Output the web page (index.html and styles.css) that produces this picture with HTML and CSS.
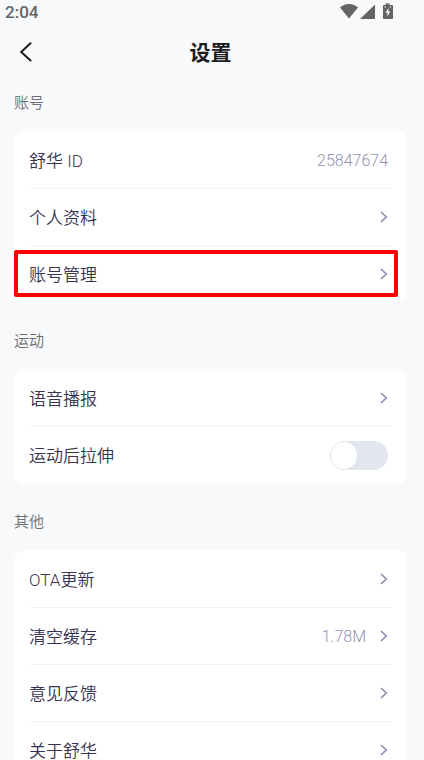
FILE: index.html
```
<!DOCTYPE html>
<html lang="zh-CN">
<head>
<meta charset="utf-8">
<meta name="viewport" content="width=device-width, initial-scale=1">
<title>设置</title>
<link rel="stylesheet" href="styles.css">
</head>
<body>
<svg class="defs" aria-hidden="true">
  <symbol id="chevron" viewBox="0 0 8 12"><path d="M1 1L6.300 6L1 11"/></symbol>
</svg>
<div class="app">
  <div class="status">
    <span class="time">2:04</span>
    <svg class="status-icons" viewBox="0 0 54 18" aria-hidden="true">
      <path d="M0 7C2.500 4.800 5.500 3.500 9 3.500s6.500 1.300 9 3.500L9 18Z"/>
      <path d="M35 4V18.500H20Z"/>
      <path d="M45.500 3h4v1.400h2.500c.6 0 1 .4 1 1v12c0 .6-.4 1-1 1h-8c-.6 0-1-.4-1-1v-12c0-.6.400-1 1-1h1.500Z"/>
      <path class="bolt" d="M48.400 7.500L45.400 12.200h2V16L50.300 10.900H48.400Z"/>
      <path class="bolt" d="M44.400 6h1.500v.9h-1.500ZM49.600 6h1.500v.9h-1.500Z"/>
    </svg>
  </div>
  <header class="topbar">
    <button class="back" type="button" aria-label="返回">
      <svg viewBox="0 0 14 20" aria-hidden="true"><path d="M11.500 1.200L2.200 10L11.500 18.500"/></svg>
    </button>
    <h1>设置</h1>
  </header>
  <main>
    <section>
      <h2>账号</h2>
      <div class="card">
        <div class="row"><span>舒华 ID</span><span class="value">25847674</span></div>
        <a class="row" href="#profile"><span>个人资料</span><svg class="chevron"><use href="#chevron"/></svg></a>
        <a class="row marked" href="#account"><span>账号管理</span><svg class="chevron"><use href="#chevron"/></svg></a>
      </div>
    </section>
    <section>
      <h2>运动</h2>
      <div class="card">
        <a class="row" href="#voice"><span>语音播报</span><svg class="chevron"><use href="#chevron"/></svg></a>
        <div class="row"><label for="stretch">运动后拉伸</label><input class="switch" id="stretch" type="checkbox" role="switch"></div>
      </div>
    </section>
    <section>
      <h2>其他</h2>
      <div class="card">
        <a class="row" href="#ota"><span>OTA更新</span><svg class="chevron"><use href="#chevron"/></svg></a>
        <a class="row" href="#cache"><span>清空缓存</span><span class="value">1.78M</span><svg class="chevron"><use href="#chevron"/></svg></a>
        <a class="row" href="#feedback"><span>意见反馈</span><svg class="chevron"><use href="#chevron"/></svg></a>
        <a class="row" href="#about"><span>关于舒华</span><svg class="chevron"><use href="#chevron"/></svg></a>
      </div>
    </section>
  </main>
</div>
</body>
</html>
```
FILE: styles.css
```
* {
  box-sizing: border-box;
}

body {
  margin: 0;
  background: #f8f9fb;
  color: #38334e;
  font-family: Roboto, "Noto Sans CJK SC", sans-serif;
}

.defs {
  position: absolute;
  width: 0;
  height: 0;
}

.app {
  display: flex;
  flex-direction: column;
  height: 100vh;
  padding-right: 3px;
}

.status {
  display: flex;
  justify-content: space-between;
  height: 24px;
  padding: 0 27px 0 5px;
  color: #636466;
}

.time {
  font-size: 17px;
  font-weight: 500;
  line-height: 24px;
}

.status-icons {
  width: 54px;
  height: 19px;
  fill: #636466;
}

.status-icons .bolt {
  fill: #f8f9fb;
}

.topbar {
  display: grid;
  grid-template-columns: 48px 1fr 48px;
  align-items: center;
  height: 58px;
}

.back {
  display: flex;
  align-items: center;
  height: 50px;
  padding: 0 0 2px 19px;
  border: 0;
  background: none;
}

.back svg {
  width: 14px;
  height: 20px;
  fill: none;
  stroke: #1c1c1e;
  stroke-width: 2;
  stroke-linecap: round;
}

h1 {
  margin: 0;
  color: #1c1c1e;
  font-size: 21px;
  font-weight: 700;
  line-height: 34px;
  text-align: center;
}

main {
  flex: 1;
  min-height: 0;
  padding: 1px 14px 0;
  overflow-y: auto;
  scrollbar-width: none;
}

section {
  margin-bottom: 18px;
}

h2 {
  margin: 0;
  padding-bottom: 8px;
  color: #6e6f72;
  font-size: 15px;
  font-weight: 350;
  line-height: 40px;
}

.card {
  padding: 1px 14px 0 15px;
  border-radius: 10px;
  background: #fff;
}

.row {
  position: relative;
  display: flex;
  align-items: center;
  height: 57px;
  padding-right: 5px;
  border-bottom: 1px solid #f3f4f6;
  color: inherit;
  font-size: 17px;
  font-weight: 350;
  line-height: 24px;
  text-decoration: none;
}

.row:last-child {
  border-bottom-color: transparent;
}

.row > :first-child {
  flex: 1;
  padding-top: 2px;
}

.value {
  padding-top: 2px;
  color: #9194b0;
  font-size: 16px;
}

.chevron {
  width: 8px;
  height: 12px;
  fill: none;
  stroke: #8e91b0;
  stroke-width: 1.7;
}

.value + .chevron {
  margin-left: 14px;
}

.marked::after {
  content: "";
  position: absolute;
  inset: 4px -5px 5px -15px;
  border: 4px solid #fe0000;
  border-radius: 2px;
}

.switch {
  display: flex;
  align-items: center;
  width: 58px;
  height: 29px;
  margin: 0;
  padding: 1px;
  border-radius: 15px;
  background: #e2e7ef;
  appearance: none;
}

.switch::before {
  content: "";
  width: 26px;
  height: 27px;
  border-radius: 50%;
  background: #fff;
}

.switch:checked {
  justify-content: flex-end;
  background: #8e91b0;
}
```
